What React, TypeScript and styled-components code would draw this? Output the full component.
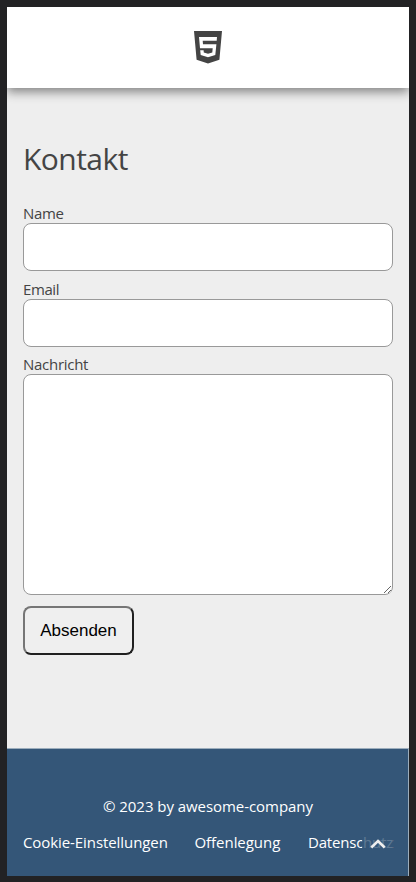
import React from "react";
import styled, { createGlobalStyle } from "styled-components";

const GlobalStyle = createGlobalStyle`
  * { box-sizing: border-box; }
  html, body { margin: 0; background: #222224; }
`;

const Frame = styled.div`
  height: 882px;
  padding: 7px 7px 6px;
  background: #222224;
  font-family: "Open Sans", "Noto Sans", sans-serif;
  color: #444;
`;

const Page = styled.div`
  position: relative;
  display: flex;
  flex-direction: column;
  width: 402px;
  height: 869px;
  overflow: hidden;
  background: #eee;
`;

const Header = styled.header`
  display: flex;
  flex: none;
  justify-content: center;
  height: 81px;
  padding: 24px 1px 0 0;
  background: #fff;
  box-shadow: 0 4px 10px rgba(0, 0, 0, 0.45);
`;

const Main = styled.main`
  flex: 1;
  padding: 48px 16px 0;
`;

const Title = styled.h1`
  margin: 0 0 21px;
  font-size: 30px;
  line-height: 46px;
  font-weight: 400;
  letter-spacing: -0.55px;
`;

const Form = styled.form`
  display: flex;
  flex-direction: column;
  align-items: flex-start;
`;

const Label = styled.label<{ $tracking: number }>`
  height: 20px;
  font-size: 15px;
  line-height: 20px;
  letter-spacing: ${(p) => p.$tracking}px;
  white-space: nowrap;
`;

const Input = styled.input`
  display: block;
  width: 370px;
  height: 48px;
  margin: 0 0 7.5px;
  padding: 12px;
  border: 1px solid #999;
  border-radius: 8px;
  background: #fff;
  outline: none;
`;

const TextArea = styled.textarea`
  display: block;
  width: 370px;
  height: 221px;
  margin: 0 0 11px;
  padding: 12px;
  border: 1px solid #999;
  border-radius: 8px;
  background: #fff;
  outline: none;
`;

const Submit = styled.button`
  width: 111px;
  height: 49px;
  padding: 0;
  border: 2px solid;
  border-color: #767676 #202020 #202020 #767676;
  border-radius: 8px;
  background: #efefef;
  color: #000;
  font: 17px "Liberation Sans", Arial, sans-serif;
`;

const Footer = styled.footer`
  flex: none;
  height: 128px;
  padding: 46px 15px 0 16px;
  border-top: 1px solid #9cadbc;
  border-right: 1px solid #9cadbc;
  background: #345678;
  color: #fff;
  font-size: 15px;
  line-height: 22px;
`;

const Copyright = styled.p`
  margin: 0 0 14px;
  text-align: center;
  letter-spacing: -0.05px;
`;

const Links = styled.nav`
  display: flex;
  justify-content: space-between;
`;

const FooterLink = styled.a<{ $width: number; $tracking: number }>`
  width: ${(p) => p.$width}px;
  color: #fff;
  letter-spacing: ${(p) => p.$tracking}px;
  text-decoration: none;
  white-space: nowrap;
`;

const ScrollTop = styled.button`
  position: absolute;
  right: 16px;
  bottom: 17px;
  display: flex;
  align-items: center;
  justify-content: center;
  width: 31px;
  height: 31px;
  padding: 0;
  border: 0;
  background: rgba(52, 86, 120, 0.8);
`;

const HtmlLogo = () => (
  <svg width="28" height="33" viewBox="0 0 28 33" aria-label="HTML5">
    <path
      fill="#444"
      fillRule="evenodd"
      d="M0 0H28L25.4 28.8L14 32.5L2.6 28.8ZM5 6L6 17.2H18.7L18.3 21.4L14 22.7L9.8 21.4L9.6 19.3H6.2L6.7 24L14 26.3L21.3 24L22.4 13.2H9L8.7 9.7H22.7L23 6Z"
    />
  </svg>
);

export default function App() {
  return (
    <>
      <GlobalStyle />
      <Frame>
        <Page>
          <Header>
            <HtmlLogo />
          </Header>
          <Main>
            <Title>Kontakt</Title>
            <Form onSubmit={(e) => e.preventDefault()}>
              <Label htmlFor="name" $tracking={-0.3}>Name</Label>
              <Input id="name" />
              <Label htmlFor="email" $tracking={-0.4}>Email</Label>
              <Input id="email" />
              <Label htmlFor="message" $tracking={-0.28}>Nachricht</Label>
              <TextArea id="message" />
              <Submit type="submit">Absenden</Submit>
            </Form>
          </Main>
          <Footer>
            <Copyright>© 2023 by awesome-company</Copyright>
            <Links>
              <FooterLink $width={145} $tracking={-0.08}>Cookie-Einstellungen</FooterLink>
              <FooterLink $width={87} $tracking={-0.05}>Offenlegung</FooterLink>
              <FooterLink $width={85} $tracking={-0.2}>Datenschutz</FooterLink>
            </Links>
          </Footer>
          <ScrollTop aria-label="Nach oben">
            <svg width="16" height="10" viewBox="0 0 16 10" fill="none" stroke="#eee" strokeWidth="2.6">
              <path d="M1.3 8.5L8 2L14.7 8.5" />
            </svg>
          </ScrollTop>
        </Page>
      </Frame>
    </>
  );
}
